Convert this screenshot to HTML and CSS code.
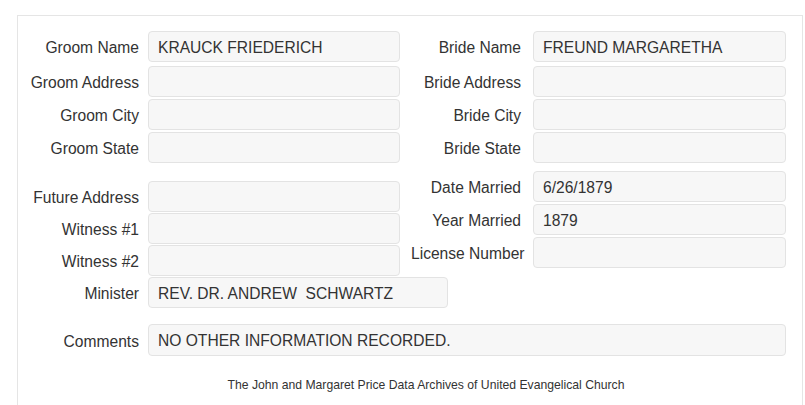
FILE: index.html
```html
<!DOCTYPE html>
<html lang="en">
    <head>
        <title>Marriage Record</title>
        <link rel="stylesheet" href="styles.css">
    </head>
    <body>
        <div class="panel">

            <div class="section">
                <div class="col col-left">
                    <div class="field first"><span class="label">Groom Name</span><div class="value">KRAUCK FRIEDERICH</div></div>
                    <div class="field"><span class="label">Groom Address</span><div class="value"></div></div>
                    <div class="field"><span class="label">Groom City</span><div class="value"></div></div>
                    <div class="field"><span class="label">Groom State</span><div class="value"></div></div>
                </div>
                <div class="col col-right">
                    <div class="field first"><span class="label">Bride Name</span><div class="value">FREUND MARGARETHA</div></div>
                    <div class="field"><span class="label">Bride Address</span><div class="value"></div></div>
                    <div class="field"><span class="label">Bride City</span><div class="value"></div></div>
                    <div class="field"><span class="label">Bride State</span><div class="value"></div></div>
                </div>
            </div>

            <div class="section second">
                <div class="col col-left tight">
                    <div class="field"><span class="label">Future Address</span><div class="value"></div></div>
                    <div class="field"><span class="label">Witness #1</span><div class="value"></div></div>
                    <div class="field"><span class="label">Witness #2</span><div class="value"></div></div>
                    <div class="field"><span class="label">Minister</span><div class="value short">REV. DR. ANDREW&nbsp; SCHWARTZ</div></div>
                </div>
                <div class="col col-right">
                    <div class="field"><span class="label">Date Married</span><div class="value">6/26/1879</div></div>
                    <div class="field"><span class="label">Year Married</span><div class="value">1879</div></div>
                    <div class="field"><span class="label">License Number</span><div class="value"></div></div>
                </div>
            </div>

            <div class="field comments"><span class="label">Comments</span><div class="value wide">NO OTHER INFORMATION RECORDED.</div></div>

            <p class="footer">The John and Margaret Price Data Archives of United Evangelical Church</p>
        </div>
    </body>
</html>
```

FILE: styles.css
```css
body {
    margin: 0;
    background-color: white;
    font-family: "Liberation Sans", Arial, sans-serif;
    font-size: 15.6px;
    color: #333;
}

.panel {
    margin: 15px 2px 0 17px;
    border: 1px solid #e5e5e5;
    border-bottom: none;
    padding: 15px 0 40px 0;
}

.section {
    display: flex;
}

.section.second {
    margin-top: 6px;
}

.col-left {
    width: 382px;
    flex-shrink: 0;
}

.col.tight {
    padding-top: 10px;
}

.field {
    display: flex;
    align-items: center;
    margin-bottom: 2px;
}

.field.first {
    margin-bottom: 4px;
}

.tight .field {
    margin-bottom: 1px;
}

.label {
    flex-shrink: 0;
    width: 121px;
    margin-right: 9px;
    padding-top: 3px;
    text-align: right;
    white-space: nowrap;
}

.col-right .label {
    width: 110px;
    margin-left: 11px;
    margin-right: 12px;
}

.value {
    flex-shrink: 0;
    width: 252px;
    height: 31px;
    box-sizing: border-box;
    padding: 7px 9px 0 9px;
    background-color: #f7f7f7;
    border: 1px solid #e3e3e3;
    border-radius: 4px;
    white-space: nowrap;
}

.col-right .value {
    width: 253px;
}

.value.short {
    width: 300px;
}

.value.wide {
    width: 638px;
    height: 32px;
}

.comments {
    margin-top: 15px;
}

.footer {
    margin: 22px 0 0 0;
    padding-left: 32px;
    text-align: center;
    font-size: 12.2px;
}
```
